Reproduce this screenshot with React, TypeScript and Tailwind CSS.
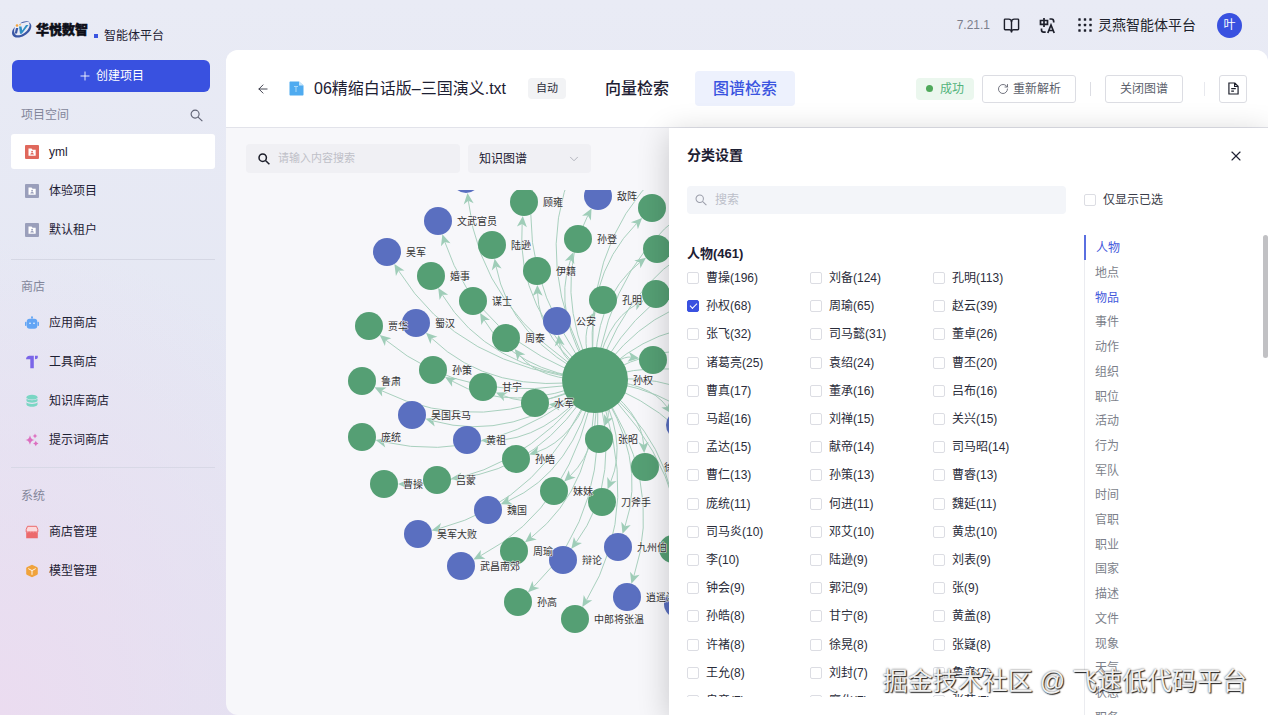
import { useState } from 'react';
import { ArrowLeft, BookOpen, ChevronDown, Plus, RotateCw, X } from 'lucide-react';

const GREEN = '#559f74';
const BLUE = '#5a6fc0';

interface GraphNode {
  x: number;
  y: number;
  label?: string;
  blue?: boolean;
}

// Hub of the graph, every other node hangs from it
const HUB = { x: 369, y: 253, r: 33 };

const NODES: GraphNode[] = [
  { x: 240, y: 52, blue: true },
  { x: 298, y: 75, label: '顾雍' },
  { x: 372, y: 69, label: '敌阵', blue: true },
  { x: 426, y: 81 },
  { x: 212, y: 94, label: '文武官员', blue: true },
  { x: 266, y: 118, label: '陆逊' },
  { x: 352, y: 112, label: '孙登' },
  { x: 431, y: 122 },
  { x: 161, y: 125, label: '吴军', blue: true },
  { x: 205, y: 149, label: '婚事' },
  { x: 311, y: 144, label: '伊籍' },
  { x: 430, y: 167 },
  { x: 247, y: 174, label: '谋士' },
  { x: 377, y: 173, label: '孔明' },
  { x: 331, y: 194, label: '公安', blue: true },
  { x: 190, y: 196, label: '蜀汉', blue: true },
  { x: 143, y: 199, label: '贾华' },
  { x: 280, y: 211, label: '周泰' },
  { x: 427, y: 233 },
  { x: 136, y: 254, label: '鲁肃' },
  { x: 207, y: 243, label: '孙策' },
  { x: 257, y: 260, label: '甘宁' },
  { x: 309, y: 276, label: '水军' },
  { x: 186, y: 288, label: '吴国兵马', blue: true },
  { x: 241, y: 313, label: '黄祖', blue: true },
  { x: 136, y: 310, label: '庞统' },
  { x: 290, y: 332, label: '孙皓' },
  { x: 373, y: 312, label: '张昭' },
  { x: 419, y: 340, label: '徐盛' },
  { x: 454, y: 298, blue: true },
  { x: 211, y: 353, label: '吕蒙' },
  { x: 158, y: 357, label: '曹操' },
  { x: 262, y: 383, label: '魏国', blue: true },
  { x: 328, y: 364, label: '妹妹' },
  { x: 376, y: 375, label: '刀斧手' },
  { x: 192, y: 407, label: '吴军大败', blue: true },
  { x: 235, y: 439, label: '武昌南郊', blue: true },
  { x: 288, y: 424, label: '周瑜' },
  { x: 337, y: 433, label: '辩论', blue: true },
  { x: 392, y: 420, label: '九州伯', blue: true },
  { x: 447, y: 422 },
  { x: 292, y: 475, label: '孙高' },
  { x: 349, y: 492, label: '中郎将张温' },
  { x: 401, y: 470, label: '逍遥津', blue: true },
  { x: 452, y: 477, blue: true },
];

// Targets outside the visible canvas, only their curves are seen
const FAR: GraphNode[] = [
  { x: 318, y: 10 },
  { x: 356, y: 20 },
  { x: 450, y: 30 },
  { x: 500, y: 60 },
  { x: 520, y: 100 },
  { x: 520, y: 140 },
  { x: 520, y: 170 },
  { x: 520, y: 205 },
  { x: 520, y: 240 },
  { x: 520, y: 275 },
  { x: 520, y: 310 },
  { x: 510, y: 345 },
  { x: 500, y: 390 },
];

const PEOPLE = [
  '曹操(196)', '刘备(124)', '孔明(113)',
  '孙权(68)', '周瑜(65)', '赵云(39)',
  '张飞(32)', '司马懿(31)', '董卓(26)',
  '诸葛亮(25)', '袁绍(24)', '曹丕(20)',
  '曹真(17)', '董承(16)', '吕布(16)',
  '马超(16)', '刘禅(15)', '关兴(15)',
  '孟达(15)', '献帝(14)', '司马昭(14)',
  '曹仁(13)', '孙策(13)', '曹睿(13)',
  '庞统(11)', '何进(11)', '魏延(11)',
  '司马炎(10)', '邓艾(10)', '黄忠(10)',
  '李(10)', '陆逊(9)', '刘表(9)',
  '钟会(9)', '郭汜(9)', '张(9)',
  '孙皓(8)', '甘宁(8)', '黄盖(8)',
  '许褚(8)', '徐晃(8)', '张嶷(8)',
  '王允(8)', '刘封(7)', '鲁肃(7)',
  '皇帝(7)', '廖化(7)', '张苞(7)',
];

const CATEGORIES = [
  '人物', '地点', '物品', '事件', '动作', '组织', '职位', '活动', '行为', '军队',
  '时间', '官职', '职业', '国家', '描述', '文件', '现象', '天气', '状态', '职务',
];

// All curves bow to the same side of the hub-node line
function edge(n: GraphNode) {
  const dx = n.x - HUB.x;
  const dy = n.y - HUB.y;
  const cx = HUB.x + dx * 0.5 + dy * 0.25;
  const cy = HUB.y + dy * 0.5 - dx * 0.25;
  const len = Math.hypot(n.x - cx, n.y - cy);
  const ux = (n.x - cx) / len;
  const uy = (n.y - cy) / len;
  const ex = n.x - ux * 14;
  const ey = n.y - uy * 14;
  const bx = ex - ux * 11;
  const by = ey - uy * 11;
  const nx = bx + ux * 3;
  const ny = by + uy * 3;
  return {
    path: `M${HUB.x} ${HUB.y}Q${cx} ${cy} ${nx} ${ny}`,
    arrow: `${ex},${ey} ${bx - uy * 5},${by + ux * 5} ${nx},${ny} ${bx + uy * 5},${by - ux * 5}`,
  };
}

function Graph() {
  return (
    <svg className="block h-[588px] w-full" role="img" aria-label="知识图谱">
      <defs>
        <clipPath id="canvas">
          <rect x="0" y="63" width="443" height="525" />
        </clipPath>
      </defs>
      <g clipPath="url(#canvas)">
        {[...NODES, ...FAR].map((n, i) => {
          const e = edge(n);
          return (
            <g key={i}>
              <path d={e.path} fill="none" stroke="#a9d0be" strokeWidth="1" />
              <polygon points={e.arrow} fill="#9fcdb8" />
            </g>
          );
        })}
        <circle cx={HUB.x} cy={HUB.y} r={HUB.r} fill={GREEN} />
        {NODES.map((n, i) => (
          <circle key={i} cx={n.x} cy={n.y} r="14" fill={n.blue ? BLUE : GREEN} />
        ))}
        <g fontSize="10" fill="#333" stroke="#f7f7fa" strokeWidth="1" paintOrder="stroke" strokeLinejoin="round">
          {NODES.filter((n) => n.label).map((n, i) => (
            <text key={i} x={n.x + 19} y={n.y + 4}>{n.label}</text>
          ))}
          <text x={HUB.x + 38} y={HUB.y + 4}>孙权</text>
        </g>
      </g>
    </svg>
  );
}

function SearchIcon({ className, weight = 1.2 }: { className: string; weight?: number }) {
  return (
    <svg className={className} viewBox="0 0 14 14" fill="none" stroke="currentColor" strokeWidth={weight}>
      <circle cx="5.500" cy="5.500" r="4.300" />
      <path d="M8.700 8.700l4.600 4.400" />
    </svg>
  );
}

function FolderIcon({ color }: { color: string }) {
  return (
    <svg className="size-[14px]" viewBox="0 0 14 14">
      <rect width="14" height="14" rx="1" fill={color} />
      <path d="M3.500 3.500h3l1 1.300h3.200v6H3.500z" fill="#fff" />
      <circle cx="7.100" cy="6.700" r=".9" fill={color} />
      <path d="M5.300 9.500c0-2 3.600-2 3.600 0z" fill={color} />
    </svg>
  );
}

function RobotIcon() {
  return (
    <svg className="size-[14px]" viewBox="0 0 14 14" fill="#62a5f5">
      <circle cx="7" cy="1.200" r="1" />
      <path d="M6.600 1.500h.8v2h-.8z" />
      <rect x="1.700" y="2.800" width="10.600" height="10" rx="3" />
      <rect x="0" y="5.800" width="1.500" height="4.200" rx=".7" />
      <rect x="12.500" y="5.800" width="1.500" height="4.200" rx=".7" />
      <circle cx="5" cy="7.300" r=".8" fill="#fff" />
      <circle cx="9" cy="7.300" r=".8" fill="#fff" />
    </svg>
  );
}

function ToolIcon() {
  return (
    <svg className="size-[14px]" viewBox="0 0 14 14" fill="#7a65e8">
      <path d="M1 4.200C1.200 2 2.500.8 4.500.8h4.300v12.400H5.300V4.200z" />
      <path d="M10 .8h2.800v1.500c0 1.300-.8 2-2.800 2z" />
    </svg>
  );
}

function DatabaseIcon() {
  return (
    <svg className="size-[14px]" viewBox="0 0 14 14" fill="#7ad6c4">
      <ellipse cx="7" cy="3.200" rx="5.500" ry="2.400" />
      <path d="M1.500 4.500c1.500 2.200 9.500 2.200 11 0v2.600c-1.500 2.200-9.500 2.200-11 0z" />
      <path d="M1.500 8.300c1.500 2.200 9.500 2.200 11 0v2.400c-1.500 2.800-9.500 2.800-11 0z" />
    </svg>
  );
}

function SparkIcon() {
  return (
    <svg className="size-[14px]" viewBox="0 0 14 14" fill="#dc6fc0">
      <path d="M5 2.200c.9 3.300 1.500 4 4.700 4.800C6.500 7.800 5.900 8.500 5 11.800 4.100 8.500 3.500 7.800.3 7 3.500 6.200 4.100 5.500 5 2.200z" />
      <path d="M10 .6l.8 1.600 1.600.8-1.600.8-.8 1.600-.8-1.600L7.600 3l1.600-.8z" />
      <path d="M10.800 7.800l.9 1.800 1.800.9-1.800.9-.9 1.800-.9-1.800-1.800-.9 1.800-.9z" />
    </svg>
  );
}

function ShopIcon() {
  return (
    <svg className="size-[14px]" viewBox="0 0 14 14">
      <path d="M2.500 1.300h9l1.300 3.200v2.500h-11.600V4.500z" fill="#fbd9dc" stroke="#ec6a6c" />
      <path d="M1.200 7c1 .8 2.200.6 2.900-.6.900 1.300 2 1.300 2.900 0 .9 1.300 2 1.300 2.900 0 .7 1.200 1.900 1.400 2.900.6v6.200H1.200z" fill="#ec6a6c" />
    </svg>
  );
}

function CubeIcon() {
  return (
    <svg className="size-[14px]" viewBox="0 0 14 14" fill="#f0a33c">
      <path d="M7 .8l4.800 2.200c.6.300 1 .8 1 1.500v5c0 .7-.4 1.200-1 1.500L7 13.200 2.200 11c-.6-.3-1-.8-1-1.500v-5c0-.7.4-1.200 1-1.500z" />
      <path d="M3.300 4.600L7 6.600l3.700-2M7 6.600v4.200" stroke="#fff" strokeWidth=".9" fill="none" />
    </svg>
  );
}

function BrandMark() {
  return (
    <svg className="h-[20px] w-[22px]" viewBox="0 0 22 20">
      <path d="M4 7C.5 10 0 14.500 3 16.700c4.500 2.500 12.500-.7 16-6.200 2.200-3.700 1.800-7.200-1.500-8.300 2 2 1.200 5-.8 7.600C13.500 14 7.500 16.700 4.700 14.700c-2-1.500-2-5-.7-7.700z" fill="#3a57a5" />
      <path d="M9 3.500c3-2.300 7-3 9.500-1.500-3-.2-6 .4-9.500 1.500z" fill="#3a57a5" />
      <circle cx="6" cy="5.500" r="1.300" fill="#f2a33a" />
      <circle cx="9" cy="4.800" r=".8" fill="#f2a33a" />
      <path d="M5 8h2.300l-1.300 5.500H3.700z" fill="#3a57a5" />
      <path d="M8 6.500h2.500l.7 4L15 5h2.500l-6.700 8.700H9z" fill="#2f8fc4" />
    </svg>
  );
}

function TranslateIcon() {
  return (
    <svg className="size-[17px]" viewBox="0 0 17 17" fill="none" stroke="#1d1f2b" strokeWidth="1.700">
      <path d="M1.500 3.500h7v3.800h-7zM5 1v9" />
      <path d="M8.800 16l3.200-8 3.200 8M10 13.500h4" />
      <path d="M10.500 2h2c1.500 0 2.200.8 2.200 2.500v1M2.500 11.500v1.500c0 1.500.7 2.200 2.200 2.200h2" />
    </svg>
  );
}

function DotsIcon() {
  return (
    <svg className="size-[14px]" viewBox="0 0 14 14" fill="#1d1f2b">
      {[1.5, 7, 12.5].map((y) => [1.5, 7, 12.5].map((x) => <rect key={`${x}-${y}`} x={x - 1.2} y={y - 1.2} width="2.400" height="2.400" rx=".5" />))}
    </svg>
  );
}

function FileIcon() {
  return (
    <svg className="h-[15px] w-[15px]" viewBox="0 0 15 15">
      <path d="M1.500.5H10l4.500 4v9c0 .6-.4 1-1 1h-12c-.6 0-1-.4-1-1v-12c0-.6.4-1 1-1z" fill="#4fabf0" />
      <path d="M10 .5l4.500 4H10z" fill="#c9e6fb" />
      <path d="M5 5.500h4M7 5.500V11" stroke="#a9d8f8" strokeWidth="1" />
    </svg>
  );
}

function DocIcon() {
  return (
    <svg className="h-[13px] w-[11px]" viewBox="0 0 12 14" fill="none" stroke="#1d1f2b" strokeWidth="1.300">
      <path d="M1 1h6.500L11 4.500V13H1zM7.200 1v3.800H11M3.500 7.200h5M3.500 9.800h3" />
    </svg>
  );
}

const PROJECTS = [
  { name: 'yml', icon: <FolderIcon color="#e0685c" />, active: true },
  { name: '体验项目', icon: <FolderIcon color="#9a9fbb" /> },
  { name: '默认租户', icon: <FolderIcon color="#9a9fbb" /> },
];

const STORES = [
  { name: '应用商店', icon: <RobotIcon /> },
  { name: '工具商店', icon: <ToolIcon /> },
  { name: '知识库商店', icon: <DatabaseIcon /> },
  { name: '提示词商店', icon: <SparkIcon /> },
];

const SYSTEM = [
  { name: '商店管理', icon: <ShopIcon /> },
  { name: '模型管理', icon: <CubeIcon /> },
];

function NavList({ items }: { items: { name: string; icon: React.ReactNode; active?: boolean }[] }) {
  return (
    <ul className="flex flex-col gap-1">
      {items.map((item) => (
        <li key={item.name}>
          <a
            href="#"
            className={`flex h-[35px] items-center gap-[10px] rounded-[3px] px-[14px] text-[12px] text-[#1d2033] ${item.active ? 'bg-white' : ''}`}
          >
            {item.icon}
            {item.name}
          </a>
        </li>
      ))}
    </ul>
  );
}

function Sidebar() {
  return (
    <aside className="flex w-[226px] shrink-0 flex-col px-[11px]">
      <div className="flex h-[60px] items-center">
        <BrandMark />
        <span className="ml-[3px] text-[13px] font-black text-[#0d0f18] [-webkit-text-stroke:0.5px_#0d0f18]">华悦数智</span>
        <span className="mt-3 ml-[6px] size-1 bg-[#3a54e0]" />
        <span className="mt-3 ml-[6px] text-[12px] text-[#1d2033]">智能体平台</span>
      </div>
      <button className="mr-[5px] ml-px flex h-[32px] items-center justify-center gap-1 rounded-md bg-[#3951e0] text-[12px] text-white">
        <Plus className="size-[14px]" strokeWidth={1.5} />
        创建项目
      </button>
      <div className="flex h-[42px] items-center justify-between pt-1 pr-3 pl-[10px] text-[12px] text-[#83869a]">
        项目空间
        <button aria-label="搜索项目">
          <SearchIcon className="size-[13px] text-[#5f6273]" />
        </button>
      </div>
      <NavList items={PROJECTS} />
      <hr className="mt-3 border-[#d5d7e4]" />
      <h2 className="flex h-[45px] items-center pt-[9px] pl-[10px] text-[12px] text-[#83869a]">商店</h2>
      <NavList items={STORES} />
      <hr className="mt-[10px] border-[#d8d8e6]" />
      <h2 className="flex h-[46px] items-center pt-[9px] pl-[10px] text-[12px] text-[#83869a]">系统</h2>
      <NavList items={SYSTEM} />
    </aside>
  );
}

function TopBar() {
  return (
    <header className="flex h-[50px] shrink-0 items-center justify-end pr-[26px] text-[14px] text-[#1d1f2b]">
      <span className="mr-[13px] text-[12px] text-[#7c7f8c]">7.21.1</span>
      <button aria-label="文档" className="mr-[19px]">
        {/* Square-cornered open book */}
        <BookOpen className="size-[17px]" strokeWidth={2} strokeLinecap="square" strokeLinejoin="miter" />
      </button>
      <button aria-label="语言" className="mr-[22px]">
        <TranslateIcon />
      </button>
      <a href="#" className="mr-[21px] flex items-center gap-[6px]">
        <DotsIcon />
        灵燕智能体平台
      </a>
      <button className="size-[25px] rounded-full bg-[#3951e0] text-[12px] text-white">叶</button>
    </header>
  );
}

function PageHeader() {
  return (
    <div className="flex h-[78px] shrink-0 items-center border-b border-[#e2e3ea] bg-white pr-[21px] pl-[30px]">
      <button aria-label="返回">
        <ArrowLeft className="size-[14px] text-[#2a2c3a]" strokeWidth={1.5} />
      </button>
      <span className="ml-[19px]">
        <FileIcon />
      </span>
      <h1 className="ml-[10px] text-[16px] whitespace-nowrap text-[#1d2033]">06精缩白话版–三国演义.txt</h1>
      <span className="ml-[22px] rounded-sm bg-[#f2f3f5] px-2 text-[11px] leading-[21px] text-[#2a2c3a]">自动</span>
      <nav className="ml-[21px] flex text-[16px] leading-[35px] font-medium whitespace-nowrap">
        <button className="px-[18px] text-[#1d2033]">向量检索</button>
        <button className="ml-2 rounded-sm bg-[#edf1fd] px-[18px] text-[#3a54e0]">图谱检索</button>
      </nav>
      <div className="ml-auto flex items-center text-[12px] whitespace-nowrap text-[#5c5f6c]">
        <span className="mr-[8px] flex h-[22px] items-center gap-[7px] rounded-sm bg-[#ebf7ee] px-[10px] text-[#53b37b]">
          <i className="size-[7px] rounded-full bg-[#4fa95b]" />
          成功
        </span>
        <button className="flex h-[28px] items-center gap-1 rounded-[3px] border border-[#dcdde3] px-[14px]">
          <RotateCw className="size-3" strokeWidth={1.7} />
          重新解析
        </button>
        <span className="mx-[14px] h-[14px] w-px bg-[#dcdde3]" />
        <button className="h-[28px] rounded-[3px] border border-[#dcdde3] px-[14px]">关闭图谱</button>
        <span className="mr-[14px] ml-[21px] h-[14px] w-px bg-[#e8e9ee]" />
        <button aria-label="日志" className="flex h-[28px] w-[28px] items-center justify-center rounded-[3px] border border-[#dcdde3]">
          <DocIcon />
        </button>
      </div>
    </div>
  );
}

const CHECKBOX =
  'relative size-3 shrink-0 appearance-none rounded-[2px] border border-[#dcdde3] bg-white checked:border-[#3951e0] checked:bg-[#3951e0] after:absolute after:top-[2px] after:left-[2px] after:hidden after:h-[4px] after:w-[7px] after:-rotate-45 after:border-b after:border-l after:border-white checked:after:block';

function CategoryDrawer() {
  const [checked, setChecked] = useState<string[]>(['孙权(68)']);

  const toggle = (name: string) => {
    setChecked((prev) => (prev.includes(name) ? prev.filter((n) => n !== name) : [...prev, name]));
  };

  return (
    <section className="absolute top-[78px] right-0 bottom-0 flex w-[599px] flex-col bg-white shadow-[0_6px_30px_rgba(0,0,0,0.2)]">
      <div className="flex h-[58px] shrink-0 items-center justify-between pr-6 pb-[3px] pl-[18px]">
        <h2 className="text-[14px] font-semibold text-[#1d2033]">分类设置</h2>
        <button aria-label="关闭">
          <X className="size-4 text-[#1d2033]" strokeWidth={1.7} />
        </button>
      </div>
      <div className="flex h-[49px] shrink-0 items-start pl-[18px] text-[12px]">
        <label className="flex h-[28px] w-[379px] items-center gap-2 rounded-sm bg-[#f3f5f9] px-2">
          <SearchIcon className="size-3 text-[#9b9eaa]" />
          <input aria-label="搜索" placeholder="搜索" className="min-w-0 flex-1 bg-transparent outline-none placeholder:text-[#bcbfc9]" />
        </label>
        <label className="ml-[18px] flex h-[28px] items-center gap-[7px] text-[#3a3c48]">
          <input type="checkbox" className={CHECKBOX} />
          仅显示已选
        </label>
      </div>
      <div className="flex min-h-0 flex-1 pl-[18px] text-[12px]">
        <div className="mb-[18px] w-[397px] shrink-0 overflow-hidden pt-[9px]">
          <h3 className="h-5 text-[13px] leading-5 font-semibold text-[#1d2033]">人物(461)</h3>
          <div className="grid h-[451px] auto-rows-fr grid-cols-[123px_123px_123px]">
            {PEOPLE.map((name) => (
              <label key={name} className="flex items-center gap-[7px] whitespace-nowrap text-[#2a2c3a]">
                <input type="checkbox" className={CHECKBOX} checked={checked.includes(name)} onChange={() => toggle(name)} />
                {name}
              </label>
            ))}
          </div>
        </div>
        <nav className="flex-1 overflow-hidden">
          <ul className="grid h-[494px] auto-rows-fr border-l border-[#ebecf0]">
            {CATEGORIES.map((name) => (
              <li key={name} className={name === '人物' ? '-ml-px border-l-2 border-[#5a6fe0]' : ''}>
                <a
                  href="#"
                  className={`flex h-full items-center pt-[2px] pl-[10px] ${name === '人物' || name === '物品' ? 'text-[#4459dc]' : 'text-[#7c7f8a]'}`}
                >
                  {name}
                </a>
              </li>
            ))}
          </ul>
        </nav>
        <div className="h-[123px] w-[5px] shrink-0 rounded-full bg-[#c1c1c4]" />
      </div>
    </section>
  );
}

export default function App() {
  return (
    <div className="relative flex h-screen overflow-hidden bg-[#e5e7f3] bg-[radial-gradient(ellipse_400px_480px_at_0%_100%,#ebdcf0_0%,transparent_100%),linear-gradient(to_bottom,#e9ebf5,#e1e4f2)] font-['Liberation_Sans','Noto_Sans_CJK_SC',sans-serif]">
      <Sidebar />
      <div className="flex min-w-0 flex-1 flex-col">
        <TopBar />
        <main className="relative flex min-h-0 flex-1 flex-col overflow-hidden rounded-l-xl rounded-tr-xl bg-[#f7f7fa]">
          <PageHeader />
          <div className="relative z-0 flex shrink-0 gap-2 pt-4 pl-5 text-[12px]">
            <label className="flex h-[29px] w-[214px] items-center gap-2 rounded-sm bg-[#f0f0f4] px-3">
              <SearchIcon className="size-3 text-[#1d1f2b]" weight={1.8} />
              <input aria-label="内容搜索" placeholder="请输入内容搜索" className="min-w-0 flex-1 bg-transparent text-[11px] outline-none placeholder:text-[#bfc0c8]" />
            </label>
            <div className="relative">
              <select aria-label="图谱类型" className="h-[29px] w-[123px] appearance-none rounded-sm bg-[#f0f0f4] px-[11px] text-[#1d2033]">
                <option>知识图谱</option>
              </select>
              <ChevronDown className="pointer-events-none absolute top-2 right-[10px] size-[14px] text-[#a9abb5]" strokeWidth={1.5} />
            </div>
          </div>
          <div className="-mt-[46px] shrink-0">
            <Graph />
          </div>
          <CategoryDrawer />
        </main>
      </div>
      <p className="pointer-events-none absolute right-[21px] bottom-[15px] text-[25px] leading-[38px] whitespace-nowrap text-[#f0f0f0] [text-shadow:1px_1px_1px_#222,0_0_2px_#555]">
        掘金技术社区 @ 飞速低代码平台
      </p>
    </div>
  );
}
